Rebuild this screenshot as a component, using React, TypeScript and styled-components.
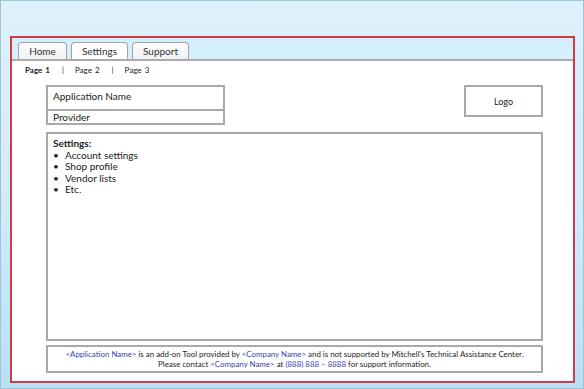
import React from 'react';
import styled, {createGlobalStyle} from 'styled-components';

const GlobalStyle = createGlobalStyle`
    html, body {
        margin: 0;
        padding: 0;
    }
    body {
        font-family: Lato, "Open Sans", sans-serif;
        color: #222;
    }
`

const tabs = ['Home', 'Settings', 'Support'];
const pages = ['Page 1', 'Page 2', 'Page 3'];
const settings = ['Account settings', 'Shop profile', 'Vendor lists', 'Etc.'];

function App() {
    return (
        <Window>
            <GlobalStyle/>
            <Frame>
                <TabStrip>
                    {tabs.map((tab) => (
                        <Tab key={tab} $active={tab === 'Settings'} $wide={tab !== 'Home'}>{tab}</Tab>
                    ))}
                </TabStrip>
                <PageNav>
                    {pages.map((page, index) => (
                        <React.Fragment key={page}>
                            {index > 0 && <Separator>|</Separator>}
                            <PageLink $current={index === 0}>{page}</PageLink>
                        </React.Fragment>
                    ))}
                </PageNav>
                <Content>
                    <TopRow>
                        <AppBox>
                            <AppName>Application Name</AppName>
                            <Provider>Provider</Provider>
                        </AppBox>
                        <LogoBox>Logo</LogoBox>
                    </TopRow>
                    <SettingsBox>
                        <SettingsTitle>Settings:</SettingsTitle>
                        <List>
                            {settings.map((item) => (
                                <Item key={item}>{item}</Item>
                            ))}
                        </List>
                    </SettingsBox>
                    <Footer>
                        <div>
                            <Placeholder>&lt;Application Name&gt;</Placeholder> is an add-on Tool provided by{' '}
                            <Placeholder>&lt;Company Name&gt;</Placeholder> and is not supported by Mitchell's Technical Assistance Center.
                        </div>
                        <div>
                            Please contact <Placeholder>&lt;Company Name&gt;</Placeholder> at{' '}
                            <Placeholder>(888) 888 – 8888</Placeholder> for support information.
                        </div>
                    </Footer>
                </Content>
            </Frame>
        </Window>
    );
}

const Window = styled.div`
    width: 584px;
    height: 389px;
    box-sizing: border-box;
    border: 1px solid #9cc6d6;
    background: linear-gradient(180deg, #def1fb 0%, #d2ebf9 50%, #b9e0f6 100%);
    padding: 35px 0 0 9px;
`

const Frame = styled.div`
    width: 565px;
    height: 347px;
    box-sizing: border-box;
    border: 2px solid #d23a44;
    background: #fff;
    display: flex;
    flex-direction: column;
`

const TabStrip = styled.div`
    height: 21px;
    flex-shrink: 0;
    background: #d6effc;
    border-bottom: 2px solid #ababab;
    display: flex;
    align-items: flex-end;
    gap: 4px;
    padding-left: 6px;
`

const Tab = styled.div<{ $active?: boolean; $wide?: boolean }>`
    width: ${(p) => (p.$wide ? '57px' : '49px')};
    height: 17px;
    box-sizing: border-box;
    border: 1.5px solid #a4a4a4;
    border-bottom: none;
    border-radius: 4px 4px 0 0;
    background: ${(p) => (p.$active ? '#ffffff' : 'linear-gradient(180deg, #fdfdfd, #eef2f4)')};
    font-size: 10px;
    line-height: 17px;
    text-align: center;
    color: #333;
`

const PageNav = styled.div`
    height: 16px;
    margin-top: 1px;
    padding-left: 13px;
    display: flex;
    align-items: center;
    font-size: 8px;
    color: #222;
`

const PageLink = styled.span<{ $current?: boolean }>`
    font-weight: ${(p) => (p.$current ? 700 : 400)};
    word-spacing: 1px;
`

const Separator = styled.span`
    margin: 0 11px 0 12px;
    color: #333;
`

const Content = styled.div`
    flex: 1;
    display: flex;
    flex-direction: column;
    padding: 7px 30px 7px 34px;
`

const TopRow = styled.div`
    display: flex;
    justify-content: space-between;
    align-items: flex-start;
    height: 40px;
`

const Box = styled.div`
    box-sizing: border-box;
    border: 2px solid #a9a9a9;
    background: #fff;
`

const AppBox = styled(Box)`
    width: 179px;
    height: 40px;
    display: flex;
    flex-direction: column;
    font-size: 10px;
`

const AppName = styled.div`
    height: 22px;
    border-bottom: 2px solid #a9a9a9;
    padding-left: 5px;
    line-height: 19px;
`

const Provider = styled.div`
    flex: 1;
    padding-left: 5px;
    line-height: 12px;
`

const LogoBox = styled(Box)`
    width: 79px;
    height: 32px;
    display: flex;
    align-items: center;
    justify-content: center;
    font-size: 9px;
`

const SettingsBox = styled(Box)`
    margin-top: 7px;
    height: 209px;
    padding: 4px 0 0 5px;
    font-size: 10px;
    line-height: 11.5px;
`

const SettingsTitle = styled.div`
    font-weight: 700;
`

const List = styled.ul`
    margin: 0;
    padding: 0;
    list-style: none;
`

const Item = styled.li`
    position: relative;
    padding-left: 12px;

    &::before {
        content: '•';
        position: absolute;
        left: 0;
    }
`

const Footer = styled(Box)`
    margin-top: 4px;
    height: 28px;
    display: flex;
    flex-direction: column;
    justify-content: center;
    align-items: center;
    font-size: 7.9px;
    line-height: 10px;
    color: #222;
`

const Placeholder = styled.span`
    color: #3d3db3;
`

export default App;
